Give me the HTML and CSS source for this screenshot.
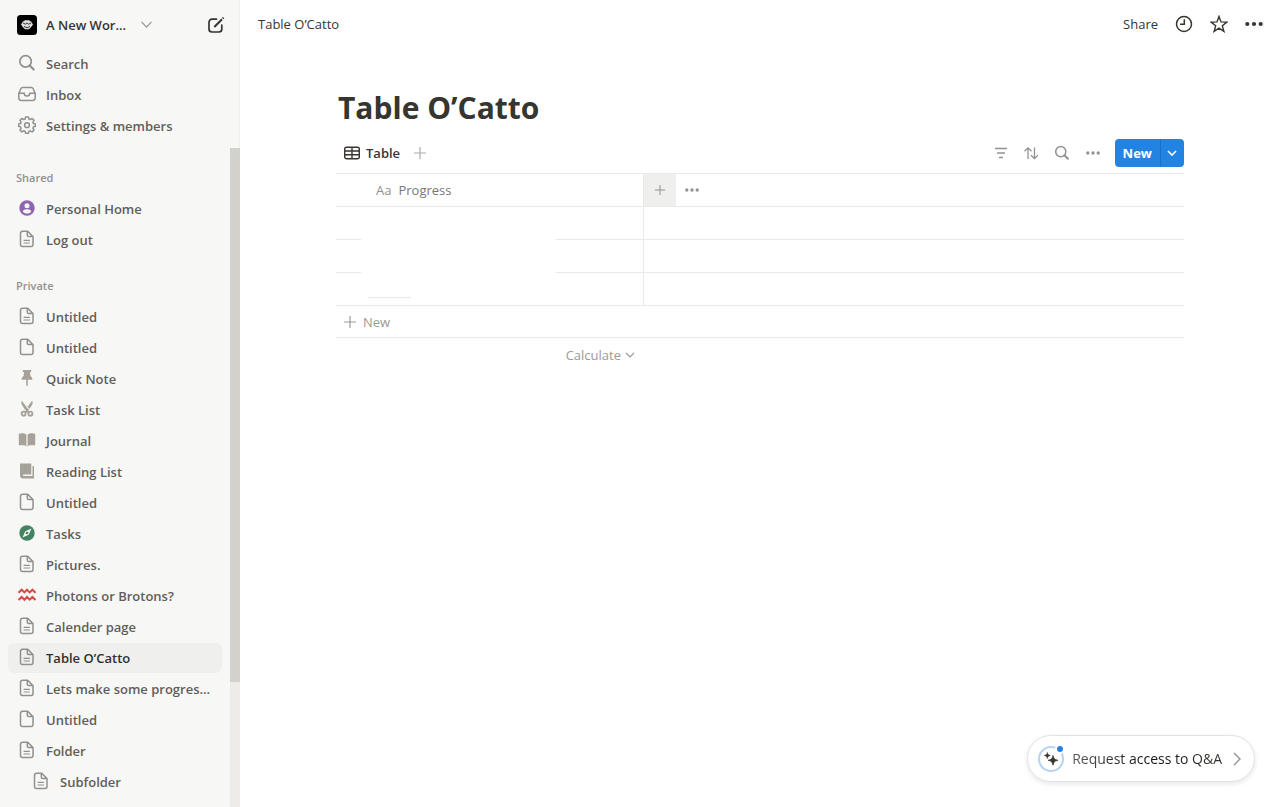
FILE: index.html
```html
<!DOCTYPE html>
<html lang="en">
<head>
    <meta charset="UTF-8">
    <meta name="viewport" content="width=device-width, initial-scale=1.0">
    <title>Table O’Catto</title>
    <link rel="stylesheet" href="styles.css">
</head>
<body>
    <!-- shared icons -->
    <svg class="sprite" aria-hidden="true">
        <symbol id="page" viewBox="0 0 18 18">
            <path d="M4.500 1.300h5.200l5.300 5.300v7.900a2 2 0 0 1-2 2H4.500a2 2 0 0 1-2-2V3.300a2 2 0 0 1 2-2zM9.300 1.500v3.700a1.400 1.400 0 0 0 1.400 1.400h4" fill="none" stroke="currentColor" stroke-width="1.500"/>
        </symbol>
        <symbol id="page-text" viewBox="0 0 18 18">
            <use href="#page"/>
            <path d="M5.600 10.300h6.300M5.600 13h6.300" fill="none" stroke="currentColor" stroke-width="1.200"/>
        </symbol>
        <symbol id="magnifier" viewBox="0 0 18 18">
            <circle cx="7.600" cy="7.400" r="5.700" fill="none" stroke="currentColor" stroke-width="1.700"/>
            <path d="M11.700 11.500l4 4" stroke="currentColor" stroke-width="2.200" stroke-linecap="round"/>
        </symbol>
        <symbol id="dots" viewBox="0 0 18 18">
            <circle cx="2.300" cy="9" r="2.100" fill="currentColor"/>
            <circle cx="9" cy="9" r="2.100" fill="currentColor"/>
            <circle cx="15.700" cy="9" r="2.100" fill="currentColor"/>
        </symbol>
        <symbol id="plus" viewBox="0 0 12 12">
            <path d="M6 0v12M0 6h12" stroke="currentColor" stroke-width="1.200"/>
        </symbol>
        <symbol id="chevron" viewBox="0 0 10 10">
            <path d="M1 3l4 4 4-4" fill="none" stroke="currentColor" stroke-width="1.200"/>
        </symbol>
    </svg>

    <aside class="sidebar">
        <div class="workspace">
            <button class="workspace-switch">
                <svg class="workspace-logo" viewBox="0 0 20 20">
                    <rect width="20" height="20" rx="3.500" fill="#000"/>
                    <path d="M4 9.500l2-3 2-1.200h4l2 1.200 2 3-1.800 2.400L12 14.200H8l-2.200-2.300z" fill="#ddd"/>
                    <path d="M6 8l2.500 1.200L10 8l1.500 1.200L14 8M7 11.500l3 1.300 3-1.300" fill="none" stroke="#222" stroke-width=".9"/>
                </svg>
                <span>A New Wor...</span>
                <svg class="chevron" viewBox="0 0 10 10"><path d="M.5 2.700L5 7.400l4.500-4.700" fill="none" stroke="currentColor"/></svg>
            </button>
            <button class="compose" aria-label="New page">
                <svg class="icon" viewBox="0 0 18 18">
                    <path d="M9.500 3.200H5a3 3 0 0 0-3 3V13a3 3 0 0 0 3 3h6.800a3 3 0 0 0 3-3V9" fill="none" stroke="currentColor" stroke-width="1.700" stroke-linecap="round"/>
                    <path d="M7.300 11L15 3.200" stroke="currentColor" stroke-width="2"/>
                    <path d="M15.700 2.500l.9-.9" stroke="currentColor" stroke-width="2"/>
                </svg>
            </button>
        </div>

        <nav class="menu">
            <a class="item" href="#"><svg class="icon"><use href="#magnifier"/></svg><span>Search</span></a>
            <a class="item" href="#">
                <svg class="icon" viewBox="0 0 18 18" fill="none" stroke="currentColor" stroke-width="1.500">
                    <path d="M4.600 2.500h8.800a2 2 0 0 1 1.800 1.200L17.200 8.500v4.300a2.600 2.600 0 0 1-2.600 2.600H3.400A2.600 2.600 0 0 1 .8 12.800V8.500l2-4.800a2 2 0 0 1 1.800-1.200z"/>
                    <path d="M.8 8.300h5.400a2.800 2.800 0 0 0 5.600 0h5.400"/>
                </svg>
                <span>Inbox</span>
            </a>
            <a class="item" href="#">
                <svg class="icon" viewBox="0 0 18 18" fill="none" stroke="currentColor" stroke-width="1.500" stroke-linejoin="round">
                    <path d="M7.600 1h2.800l.5 2 1.300.6 1.900-1.100 1.900 1.900-1.100 1.900.6 1.300 1.900.5v2.200l-1.900.5-.6 1.400 1.100 1.800-1.900 1.900-1.900-1.100-1.300.6-.5 1.900H7.600l-.5-1.900-1.300-.6-1.900 1.100L2 14l1.100-1.800-.6-1.400-1.900-.5V8.100l1.900-.5.600-1.300L2 4.400l1.900-1.900 1.900 1.100L7.100 3z"/>
                    <circle cx="9" cy="9.200" r="2.400"/>
                </svg>
                <span>Settings &amp; members</span>
            </a>
        </nav>

        <div class="scroller">
            <nav class="pages">
                <h2>Shared</h2>
                <a class="item" href="#">
                    <svg class="icon" viewBox="0 0 18 18">
                        <circle cx="9" cy="9" r="7.700" fill="#9065b0"/>
                        <circle cx="9" cy="6.700" r="2.500" fill="#f7f7f5"/>
                        <path d="M4.800 12.800c0-1.700 1.900-2.500 4.200-2.500s4.200.8 4.200 2.500c-1 1.100-2.500 1.800-4.200 1.800s-3.200-.7-4.200-1.800z" fill="#f7f7f5"/>
                    </svg>
                    <span>Personal Home</span>
                </a>
                <a class="item" href="#"><svg class="icon"><use href="#page-text"/></svg><span>Log out</span></a>

                <h2>Private</h2>
                <a class="item" href="#"><svg class="icon"><use href="#page-text"/></svg><span>Untitled</span></a>
                <a class="item" href="#"><svg class="icon"><use href="#page"/></svg><span>Untitled</span></a>
                <a class="item" href="#">
                    <svg class="icon tan" viewBox="0 0 18 18"><path d="M4.800 1h8.400v1.900h-1.200l.4 4c1.300.8 2 2 2 3.800H9.800V16L9 17.500 8.200 16v-5.300H3.600c0-1.800.7-3 2-3.800l.4-4H4.800z"/></svg>
                    <span>Quick Note</span>
                </a>
                <a class="item" href="#">
                    <svg class="icon tan" viewBox="0 0 18 18">
                        <path d="M4 1.200c-.8 1.500-.3 3 .5 4.200l3 4.500L9.400 8.600zM14 1.200c.8 1.500.3 3-.5 4.200L11.300 8.600 9.800 6.800z" stroke="currentColor" stroke-width=".5"/>
                        <path d="M8 9l2.500 3.500M10.300 9l-2.700 3.500" stroke="currentColor" stroke-width="2"/>
                        <circle cx="5.600" cy="13.700" r="2" fill="none" stroke="currentColor" stroke-width="1.800"/>
                        <circle cx="12.400" cy="13.700" r="2" fill="none" stroke="currentColor" stroke-width="1.800"/>
                    </svg>
                    <span>Task List</span>
                </a>
                <a class="item" href="#">
                    <svg class="icon tan" viewBox="0 0 18 18"><path d="M.8 2.800C3.500 2 6.500 2 8.400 3.600v12.200c-.6-1.200-1.800-1.500-3-1.500H.8zM17.200 2.800c-2.700-.8-5.700-.8-7.600.8v12.200c.6-1.200 1.800-1.500 3-1.500h4.600z"/></svg>
                    <span>Journal</span>
                </a>
                <a class="item" href="#">
                    <svg class="icon tan" viewBox="0 0 18 18"><path d="M2 1.500h11.300v11H5.300a1 1 0 0 0 0 1.500h9.200V4H16v12.500H5.500A3.500 3.500 0 0 1 2 13z"/></svg>
                    <span>Reading List</span>
                </a>
                <a class="item" href="#"><svg class="icon"><use href="#page"/></svg><span>Untitled</span></a>
                <a class="item" href="#">
                    <svg class="icon" viewBox="0 0 18 18">
                        <circle cx="9" cy="9" r="7.700" fill="#448361"/>
                        <path d="M13.500 4.500l-2.800 6.200-6.200 2.800 2.800-6.200z" fill="#f7f7f5"/>
                        <circle cx="9" cy="9" r="1.300" fill="#448361"/>
                    </svg>
                    <span>Tasks</span>
                </a>
                <a class="item" href="#"><svg class="icon"><use href="#page-text"/></svg><span>Pictures.</span></a>
                <a class="item" href="#">
                    <svg class="icon" viewBox="0 0 18 18" fill="none" stroke="#d44c47" stroke-width="2">
                        <path d="M.5 6.700l3.200-3 2.700 2.700L9 3.700l2.700 2.700 2.700-2.700 3.100 3M.5 14l3.200-3 2.700 2.700L9 11l2.700 2.700 2.700-2.700 3.100 3"/>
                    </svg>
                    <span>Photons or Brotons?</span>
                </a>
                <a class="item" href="#"><svg class="icon"><use href="#page-text"/></svg><span>Calender page</span></a>
                <a class="item selected" href="#"><svg class="icon"><use href="#page-text"/></svg><span>Table O’Catto</span></a>
                <a class="item" href="#"><svg class="icon"><use href="#page-text"/></svg><span>Lets make some progres...</span></a>
                <a class="item" href="#"><svg class="icon"><use href="#page"/></svg><span>Untitled</span></a>
                <a class="item" href="#"><svg class="icon"><use href="#page-text"/></svg><span>Folder</span></a>
                <a class="item nested" href="#"><svg class="icon"><use href="#page-text"/></svg><span>Subfolder</span></a>
            </nav>
            <div class="scrollbar"><div class="thumb"></div></div>
        </div>
    </aside>

    <main class="main">
        <header class="topbar">
            <a class="breadcrumb" href="#">Table O’Catto</a>
            <div class="actions">
                <button class="share">Share</button>
                <button aria-label="Updates">
                    <svg class="icon" viewBox="0 0 18 18" fill="none" stroke="currentColor" stroke-width="1.500"><circle cx="9" cy="9" r="7.500"/><path d="M9.300 4.200v5.100H5"/></svg>
                </button>
                <button aria-label="Favorite">
                    <svg class="icon" viewBox="0 0 18 18" fill="none" stroke="currentColor" stroke-width="1.400"><path d="M9 1.400l2 5.500 5.900.2-4.600 3.600 1.600 5.700L9 13.100l-4.900 3.300 1.600-5.700L1.100 7.100 7 6.900z"/></svg>
                </button>
                <button aria-label="More"><svg class="icon"><use href="#dots"/></svg></button>
            </div>
        </header>

        <section class="content">
            <h1>Table O’Catto</h1>

            <div class="toolbar">
                <button class="tab">
                    <svg class="table-icon" viewBox="0 0 16 16" fill="none" stroke="currentColor" stroke-width="1.400"><rect x=".7" y="2.200" width="14.600" height="11.600" rx="2"/><path d="M.7 6h14.600M.7 9.800h14.600M8 2.200v11.600"/></svg>
                    Table
                </button>
                <button class="add-view" aria-label="Add view"><svg class="plus"><use href="#plus"/></svg></button>
                <div class="tools">
                    <button aria-label="Filter"><svg class="tool" viewBox="0 0 14 14"><path d="M1 2.500h12M3 7h8M5 11.500h4" stroke="currentColor" stroke-width="1.500"/></svg></button>
                    <button aria-label="Sort"><svg class="tool" viewBox="0 0 14 14" fill="none" stroke="currentColor" stroke-width="1.300"><path d="M4 13V2M.5 5.300L4 1.800l3.500 3.500M10.500 1.500v11M7 9.200l3.500 3.500L14 9.200"/></svg></button>
                    <button aria-label="Search"><svg class="tool-search"><use href="#magnifier"/></svg></button>
                    <button aria-label="View options"><svg class="tool"><use href="#dots"/></svg></button>
                </div>
                <div class="new">
                    <button class="new-label">New</button>
                    <button class="new-more" aria-label="More templates"><svg class="chevron-small" viewBox="0 0 10 10"><path d="M1 3l4 4 4-4" fill="none" stroke="currentColor" stroke-width="1.600"/></svg></button>
                </div>
            </div>

            <table class="grid">
                <colgroup>
                    <col class="col-handle"><col class="col-name"><col class="col-rest"><col class="col-add"><col>
                </colgroup>
                <thead>
                    <tr>
                        <th class="name" colspan="3"><span class="type">Aa</span>Progress</th>
                        <th class="add"><button aria-label="Add property"><svg class="plus-small"><use href="#plus"/></svg></button></th>
                        <th class="more"><button aria-label="Properties"><svg class="tool"><use href="#dots"/></svg></button></th>
                    </tr>
                </thead>
                <tbody>
                    <tr><td></td><td class="blank"></td><td></td><td class="side" colspan="2"></td></tr>
                    <tr><td></td><td class="blank"></td><td></td><td class="side" colspan="2"></td></tr>
                    <tr><td></td><td class="last"><div class="mark"></div></td><td></td><td class="side" colspan="2"></td></tr>
                    <tr>
                        <td class="new-row" colspan="5"><button><svg class="plus"><use href="#plus"/></svg>New</button></td>
                    </tr>
                </tbody>
                <tfoot>
                    <tr>
                        <td class="calculate" colspan="3"><button>Calculate<svg class="chevron-small"><use href="#chevron"/></svg></button></td>
                        <td colspan="2"></td>
                    </tr>
                </tfoot>
            </table>
        </section>
    </main>

    <button class="qa">
        <span class="qa-icon">
            <svg class="sparkle" viewBox="0 0 16 16" fill="currentColor">
                <path d="M10 4.500c.7 3 1.500 4 4.800 4.800C11.500 10 10.700 11 10 14.200 9.300 11 8.500 10 5.200 9.300 8.500 8.500 9.300 7.500 10 4.500z" stroke="currentColor" stroke-width=".8"/>
                <path d="M4.300 1.500c.4 1.900 1 2.500 3 3-2 .5-2.600 1.100-3 3-.4-1.900-1-2.500-3-3 2-.5 2.600-1.100 3-3z" stroke="currentColor" stroke-width=".6"/>
            </svg>
            <span class="badge"></span>
        </span>
        <span class="qa-text">Request access to Q&amp;A</span>
        <svg class="qa-arrow" viewBox="0 0 8 14"><path d="M1 1l6 6-6 6" fill="none" stroke="currentColor" stroke-width="1.400"/></svg>
    </button>
</body>
</html>
```
FILE: styles.css
```css
* {
    box-sizing: border-box;
}

body {
    margin: 0;
    height: 100vh;
    display: flex;
    overflow: hidden;
    background-color: white;
    color: #37352f;
    font-family: 'Segoe UI', 'Open Sans', sans-serif;
    font-size: 13px;
    line-height: 20px;
}

a {
    color: inherit;
    text-decoration: none;
}

button {
    display: flex;
    align-items: center;
    padding: 0;
    border: none;
    background: none;
    color: inherit;
    font: inherit;
    cursor: pointer;
}

svg {
    display: block;
    flex-shrink: 0;
}

.sprite {
    display: none;
}

.icon {
    width: 18px;
    height: 18px;
}

/* Sidebar */
.sidebar {
    width: 240px;
    flex-shrink: 0;
    display: flex;
    flex-direction: column;
    background-color: #f7f7f5;
    box-shadow: inset -1px 0 0 #f0f0ee;
}

.workspace {
    height: 49px;
    display: flex;
    align-items: center;
    justify-content: space-between;
    padding: 0 15px 0 17px;
    font-weight: 600;
}

.workspace-switch {
    gap: 9px;
}

.workspace-logo {
    width: 20px;
    height: 20px;
}

.chevron {
    width: 11px;
    height: 11px;
    margin-left: 6px;
    color: #91918e;
}

.item {
    height: 30px;
    display: flex;
    align-items: center;
    gap: 10px;
    margin: 0 8px 1px;
    padding: 0 10px;
    border-radius: 6px;
    color: #5f5e5b;
    font-weight: 600;
    white-space: nowrap;
}

.item .icon {
    margin-bottom: 2px;
    color: #91918e;
}

.item .tan {
    color: #a6a299;
    fill: #a6a299;
}

.item.selected {
    background-color: #efefed;
    color: #32302c;
}

.item.nested {
    padding-left: 24px;
}

.menu {
    padding-bottom: 6px;
}

.scroller {
    flex: 1;
    min-height: 0;
    display: flex;
}

.pages {
    flex: 1;
    min-width: 0;
    display: flex;
    flex-direction: column;
    overflow: hidden;
}

.pages .item,
.pages h2 {
    flex-shrink: 0;
}

.pages h2 {
    height: 30px;
    margin: 15px 16px 1px;
    color: #91918e;
    font-size: 11px;
    font-weight: 600;
    line-height: 30px;
}

.scrollbar {
    width: 10px;
    background-color: #edece9;
}

.thumb {
    height: 81%;
    background-color: #d3d1cb;
}

/* Main */
.main {
    flex: 1;
    min-width: 0;
}

.topbar {
    height: 48px;
    display: flex;
    align-items: center;
    justify-content: space-between;
    padding: 0 17px 0 18px;
}

.actions {
    display: flex;
    align-items: center;
    gap: 17px;
}

.content {
    padding: 36px 96px 0;
}

h1 {
    margin: 0;
    padding-left: 2px;
    font-size: 30px;
    font-weight: 700;
    line-height: 48px;
}

.toolbar {
    height: 41px;
    display: flex;
    align-items: center;
    padding-left: 8px;
}

.tab {
    gap: 6px;
    font-weight: 600;
}

.table-icon {
    width: 16px;
    height: 16px;
}

.add-view {
    margin-left: 14px;
    color: #acaba9;
}

.plus {
    width: 12px;
    height: 12px;
}

.plus-small {
    width: 10px;
    height: 10px;
}

.tools {
    display: flex;
    align-items: center;
    gap: 16px;
    margin-left: auto;
    margin-right: 15px;
    color: #91918e;
}

.tool {
    width: 14px;
    height: 14px;
}

.tool-search {
    width: 16px;
    height: 16px;
}

.new {
    height: 28px;
    display: flex;
    border-radius: 4px;
    overflow: hidden;
    background-color: #2383e2;
    color: white;
}

.new-label {
    padding: 0 8px;
    font-weight: 700;
}

.new-more {
    padding: 0 7px 0 6px;
    border-left: 1px solid #1b70c4;
}

.chevron-small {
    width: 10px;
    height: 10px;
}

.grid {
    width: 100%;
    table-layout: fixed;
    border-spacing: 0;
    border-top: 1px solid #e9e9e7;
}

.col-handle {
    width: 25px;
}

.col-name {
    width: 195px;
}

.col-rest {
    width: 87px;
}

.col-add {
    width: 33px;
}

.grid th,
.grid td {
    height: 33px;
    padding: 0;
    border-bottom: 1px solid #e9e9e7;
    color: #787774;
    font-weight: 400;
    text-align: left;
}

.grid .name {
    padding-left: 40px;
}

.type {
    margin-right: 7px;
    color: #91918e;
}

.grid .add {
    border-left: 1px solid #e9e9e7;
    background-color: #efefee;
    color: #91918e;
}

.grid .add button {
    margin: 0 auto;
}

.grid .more {
    padding-left: 9px;
    color: #91918e;
}

.grid .blank {
    border-bottom-color: transparent;
}

.grid .side {
    border-left: 1px solid #e9e9e7;
}

.grid .last {
    vertical-align: bottom;
    padding: 0 0 7px 7px;
}

.mark {
    width: 43px;
    height: 1px;
    background-color: #e9e9e7;
}

.grid .new-row {
    height: 32px;
    padding-left: 8px;
    color: #9b9a97;
}

.new-row button {
    gap: 7px;
}

.grid tfoot td {
    border-bottom: none;
}

.grid .calculate {
    padding-right: 8px;
    color: #9b9a97;
}

.calculate button {
    gap: 4px;
    margin-left: auto;
}

/* Floating button */
.qa {
    position: fixed;
    right: 25px;
    bottom: 25px;
    height: 47px;
    padding: 0 13px 0 10px;
    border: 1px solid #e3e2e0;
    border-radius: 24px;
    background-color: white;
    box-shadow: 0 2px 5px rgba(15, 15, 15, 0.1);
    font-size: 14px;
}

.qa-icon {
    position: relative;
    width: 26px;
    height: 26px;
    display: flex;
    align-items: center;
    justify-content: center;
    border: 2px solid #b5d3f3;
    border-radius: 50%;
}

.sparkle {
    width: 16px;
    height: 16px;
}

.badge {
    position: absolute;
    top: -4px;
    right: -3px;
    width: 10px;
    height: 10px;
    border: 2px solid white;
    border-radius: 50%;
    background-color: #2383e2;
}

.qa-text {
    margin: 0 11px 0 8px;
    background-image: linear-gradient(90deg, #5a5955, #111 50%, #37352f);
    background-clip: text;
    -webkit-background-clip: text;
    color: transparent;
}

.qa-arrow {
    width: 8px;
    height: 14px;
    color: #91918e;
}
```
